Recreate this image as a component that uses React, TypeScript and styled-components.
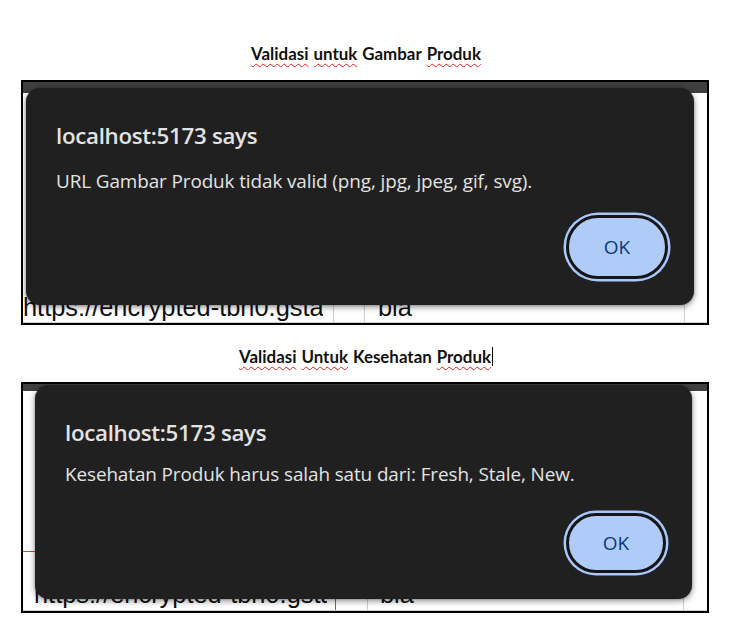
import React from "react";
import styled, { createGlobalStyle } from "styled-components";

const Global = createGlobalStyle`
  html, body { margin: 0; padding: 0; background: #ffffff; }
  body { width: 732px; height: 632px; overflow: hidden; }
`;

const Page = styled.div`
  display: flex;
  flex-direction: column;
  padding-top: 43px;
`;

const Heading = styled.div<{ $mt: number }>`
  margin-top: ${(p) => p.$mt}px;
  height: 20px;
  display: flex;
  justify-content: center;
  align-items: center;
  font-family: Lato, "Open Sans", sans-serif;
  font-weight: 700;
  font-size: 16.9px;
  color: #111;
  gap: 5px;
`;

const Spell = styled.span`
  text-decoration: underline wavy #e02020;
  text-decoration-thickness: 1px;
  text-underline-offset: 3px;
`;

const Caret = styled.span`
  display: inline-block;
  width: 1px;
  height: 19px;
  background: #000;
  margin-left: -4px;
`;

const Frame = styled.div<{ $h: number; $mt: number }>`
  position: relative;
  box-sizing: border-box;
  margin: ${(p) => p.$mt}px 0 0 21px;
  width: 688px;
  height: ${(p) => p.$h}px;
  border: 2px solid #000;
  display: flex;
  flex-direction: column;
  overflow: hidden;
`;

const TopBar = styled.div<{ $h: number }>`
  height: ${(p) => p.$h}px;
  background: #3f3f3f;
`;

const Blank = styled.div`
  flex: 1;
  position: relative;
`;

const RedLine = styled.div`
  position: absolute;
  left: 0;
  width: 320px;
  bottom: 18px;
  height: 1px;
  background: #e53935;
`;

const Row = styled.div<{ $cols: string }>`
  display: grid;
  grid-template-columns: ${(p) => p.$cols};
  height: 40px;
  border-bottom: 1px solid #cfcfcf;
`;

const Cell = styled.div<{ $red?: boolean }>`
  border-right: 1px solid ${(p) => (p.$red ? "#e53935" : "#cfcfcf")};
  overflow: hidden;
  white-space: nowrap;
  font-family: "Liberation Sans", Arial, sans-serif;
  font-size: 25.4px;
  color: #111;
  line-height: 40px;
  &:last-child { border-right: none; }
`;

const CellText = styled.div<{ $pl: number; $pr: number; $dy: number }>`
  margin: 0 ${(p) => p.$pr}px 0 ${(p) => p.$pl}px;
  overflow: hidden;
  position: relative;
  top: ${(p) => p.$dy}px;
`;

const Dialog = styled.div<{ $l: number; $t: number; $w: number; $h: number }>`
  position: absolute;
  left: ${(p) => p.$l}px;
  top: ${(p) => p.$t}px;
  width: ${(p) => p.$w}px;
  height: ${(p) => p.$h}px;
  box-sizing: border-box;
  background: #202020;
  border-radius: 14px;
  box-shadow: 0 2px 6px rgba(0, 0, 0, 0.45), 0 0 2px rgba(0, 0, 0, 0.3);
  padding: 34px 26px 26px 30px;
  display: flex;
  flex-direction: column;
  font-family: "Open Sans", "Noto Sans", sans-serif;
  color: #e3e3e3;
`;

const Title = styled.div`
  font-size: 22.3px;
  font-weight: 600;
  line-height: 28px;
  letter-spacing: -0.3px;
`;

const Message = styled.div<{ $mt: number }>`
  margin-top: ${(p) => p.$mt}px;
  font-size: 18.9px;
  line-height: 24px;
  letter-spacing: -0.1px;
`;

const Actions = styled.div`
  margin-top: auto;
  display: flex;
  justify-content: flex-end;
`;

const OkButton = styled.button<{ $w: number; $h: number }>`
  box-sizing: border-box;
  width: ${(p) => p.$w}px;
  height: ${(p) => p.$h}px;
  border-radius: 999px;
  border: 3px solid #151515;
  box-shadow: 0 0 0 2.5px #a8c7fa;
  background: #afcbf8;
  color: #0b3a7a;
  font-family: "Open Sans", "Noto Sans", sans-serif;
  font-size: 19px;
  font-weight: 500;
  padding: 0;
  cursor: pointer;
`;

export default function App() {
  return (
    <>
      <Global />
      <Page>
        <Heading $mt={0}>
          <Spell>Validasi</Spell>
          <Spell>untuk</Spell>
          <span>Gambar</span>
          <Spell>Produk</Spell>
        </Heading>
        <Frame $mt={17} $h={245}>
          <TopBar $h={11} />
          <Blank />
          <Row $cols="311px 31px 320px 1fr">
            <Cell>
              <CellText $pl={0} $pr={10} $dy={5}>https://encrypted-tbn0.gstatic.com</CellText>
            </Cell>
            <Cell />
            <Cell>
              <CellText $pl={13} $pr={0} $dy={5}>bla</CellText>
            </Cell>
            <Cell />
          </Row>
          <Dialog $l={3} $t={6} $w={668} $h={217}>
            <Title>localhost:5173 says</Title>
            <Message $mt={19}>URL Gambar Produk tidak valid (png, jpg, jpeg, gif, svg).</Message>
            <Actions>
              <OkButton $w={102} $h={64}>OK</OkButton>
            </Actions>
          </Dialog>
        </Frame>
        <Heading $mt={21}>
          <Spell>Validasi</Spell>
          <Spell>Untuk</Spell>
          <span>Kesehatan</span>
          <Spell>Produk</Spell>
          <Caret />
        </Heading>
        <Frame $mt={16} $h={231}>
          <TopBar $h={7} />
          <Blank>
            <RedLine />
          </Blank>
          <Row $cols="313px 32px 316px 1fr">
            <Cell $red>
              <CellText $pl={11} $pr={8} $dy={4}>https://encrypted-tbn0.gstatic.com</CellText>
            </Cell>
            <Cell />
            <Cell>
              <CellText $pl={12} $pr={0} $dy={4}>bla</CellText>
            </Cell>
            <Cell />
          </Row>
          <Dialog $l={12} $t={1} $w={657} $h={214}>
            <Title>localhost:5173 says</Title>
            <Message $mt={15}>Kesehatan Produk harus salah satu dari: Fresh, Stale, New.</Message>
            <Actions>
              <OkButton $w={100} $h={60}>OK</OkButton>
            </Actions>
          </Dialog>
        </Frame>
      </Page>
    </>
  );
}
